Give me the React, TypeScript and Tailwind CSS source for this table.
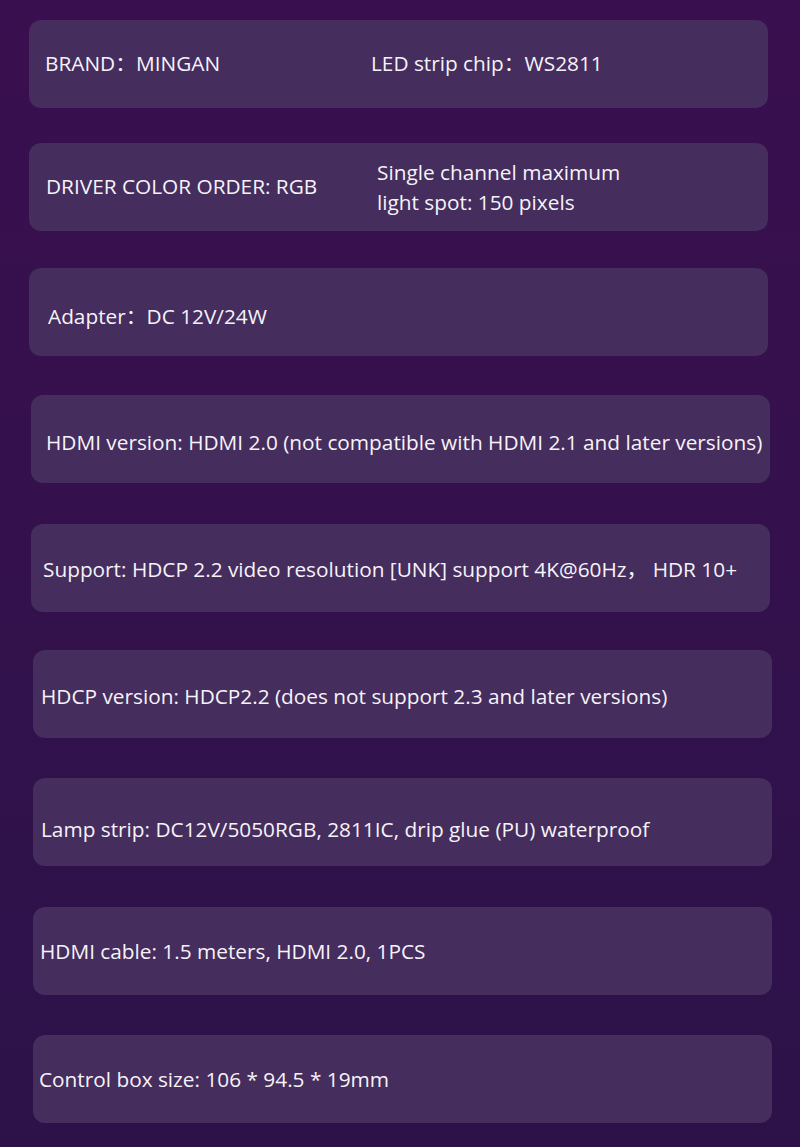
const font = { fontFamily: '"Open Sans", "Noto Sans CJK SC", sans-serif' };

type Row = {
  card: string;
  text: string;
  body: string;
};

const rows: Row[] = [
  { card: 'mt-[20px] ml-[29px]', text: 'pl-[16px]', body: 'BRAND：MINGAN' },
  { card: 'mt-[35px] ml-[29px]', text: 'pl-[17px]', body: 'DRIVER COLOR ORDER: RGB' },
  { card: 'mt-[37px] ml-[29px]', text: 'pl-[19px] pt-[8px]', body: 'Adapter：DC 12V/24W' },
  { card: 'mt-[39px] ml-[31px]', text: 'pl-[15px] pt-[6px]', body: 'HDMI version: HDMI 2.0 (not compatible with HDMI 2.1 and later versions)' },
  { card: 'mt-[41px] ml-[31px]', text: 'pl-[12px] pt-[2px]', body: 'Support: HDCP 2.2 video resolution [UNK] support 4K@60Hz， HDR 10+' },
  { card: 'mt-[38px] ml-[33px]', text: 'pl-[8px] pt-[5px]', body: 'HDCP version: HDCP2.2 (does not support 2.3 and later versions)' },
  { card: 'mt-[40px] ml-[33px]', text: 'pl-[8px] pt-[14px]', body: 'Lamp strip: DC12V/5050RGB, 2811IC, drip glue (PU) waterproof' },
  { card: 'mt-[41px] ml-[33px]', text: 'pl-[7px] pt-[1px]', body: 'HDMI cable: 1.5 meters, HDMI 2.0, 1PCS' },
  { card: 'mt-[40px] ml-[33px]', text: 'pl-[6px] pt-[0px]', body: 'Control box size: 106 * 94.5 * 19mm' },
];

export default function App() {
  return (
    <div
      className="w-[800px] h-[1147px] overflow-hidden flex flex-col bg-gradient-to-b from-[#3a0f4f] to-[#2c1249] text-[#f6f3f8]"
      style={font}
    >
      {rows.map((r, i) => (
        <div
          key={i}
          className={`${r.card} w-[739px] h-[88px] shrink-0 rounded-[12px] bg-[#452d5e] flex items-center`}
        >
          {i === 0 ? (
            <div className="flex w-full pl-[16px] pb-[2px] text-[20.8px] leading-none">
              <span className="w-[326px]">BRAND：MINGAN</span>
              <span>LED strip chip：WS2811</span>
            </div>
          ) : i === 1 ? (
            <div className="flex w-full items-center pl-[17px] text-[20.8px]">
              <span className="w-[331px]">DRIVER COLOR ORDER: RGB</span>
              <span className="leading-[30px]">
                Single channel maximum
                <br />
                light spot: 150 pixels
              </span>
            </div>
          ) : (
            <div className={`${r.text} text-[20.8px] leading-none whitespace-nowrap`}>{r.body}</div>
          )}
        </div>
      ))}
    </div>
  );
}
